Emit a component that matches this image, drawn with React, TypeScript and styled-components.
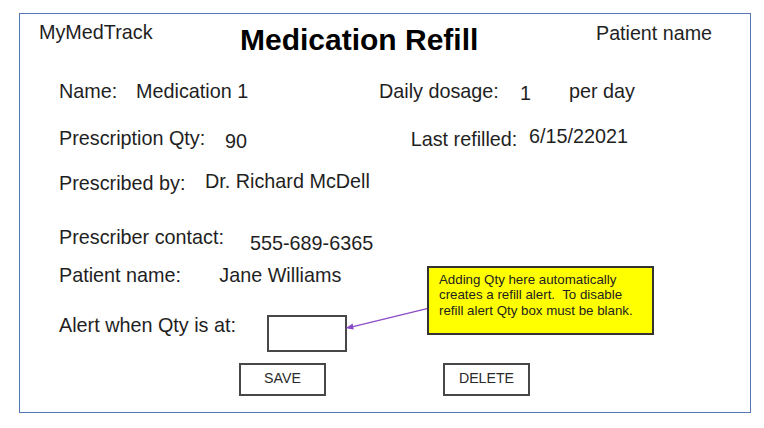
import React from "react";
import styled, { createGlobalStyle } from "styled-components";

const Global = createGlobalStyle`
  html, body { margin: 0; padding: 0; background: #ffffff; }
  body { font-family: "Liberation Sans", Arial, sans-serif; color: #1f1f1f; }
`;

const Frame = styled.div`
  position: relative;
  box-sizing: border-box;
  margin: 13px 0 0 19px;
  width: 732px;
  height: 400px;
  border: 1px solid #5877b6;
  background: #fff;
`;

const Header = styled.header`
  display: grid;
  grid-template-columns: 201px 356px 1fr;
  height: 66px;
  padding-left: 19px;
`;

const Brand = styled.div`
  margin-top: 7px;
  font-size: 19.8px;
  line-height: 23px;
  white-space: nowrap;
`;

const Title = styled.h1`
  margin: 8.6px 0 0;
  font-size: 30px;
  line-height: 34px;
  font-weight: 700;
  color: #000;
  white-space: nowrap;
`;

const Patient = styled.div`
  margin-top: 8.4px;
  font-size: 19.7px;
  line-height: 23px;
  white-space: nowrap;
`;

const Row = styled.div<{ $h: number }>`
  display: flex;
  align-items: flex-start;
  height: ${(p) => p.$h}px;
  padding-left: 39px;
  font-size: 19.8px;
  line-height: 23px;
`;

const Field = styled.div<{ $w?: number }>`
  display: flex;
  align-items: flex-start;
  ${(p) => (p.$w ? `width: ${p.$w}px; flex: none;` : "")}
`;

const Label = styled.span<{ $w: number; $dy?: number }>`
  width: ${(p) => p.$w}px;
  flex: none;
  margin-top: ${(p) => p.$dy ?? 0}px;
  white-space: nowrap;
`;

const Value = styled.span<{ $w?: number; $dy?: number }>`
  ${(p) => (p.$w ? `width: ${p.$w}px; flex: none;` : "")}
  margin-top: ${(p) => p.$dy ?? 0}px;
  white-space: nowrap;
`;

const QtyBox = styled.input`
  box-sizing: border-box;
  width: 80px;
  height: 37px;
  margin: 0.7px 0 0;
  padding: 0;
  border: 2px solid #474747;
  background: #fff;
  outline: none;
`;

const Buttons = styled.div`
  display: flex;
  gap: 117px;
  padding-left: 219px;
`;

const Button = styled.button`
  box-sizing: border-box;
  width: 87px;
  height: 33px;
  padding: 0 0 2px;
  border: 2px solid #474747;
  background: #fff;
  font-family: "Liberation Sans", Arial, sans-serif;
  font-size: 14.2px;
  color: #2a2a2a;
  cursor: pointer;
`;

const Callout = styled.div`
  position: absolute;
  left: 407px;
  top: 252px;
  box-sizing: border-box;
  width: 227px;
  height: 69px;
  padding: 3.5px 0 0 10px;
  border: 2px solid #333;
  background: #ffff00;
  font-size: 13.3px;
  line-height: 15.5px;
  color: #222;
  white-space: pre;
`;

const Arrow = styled.svg`
  position: absolute;
  left: 0;
  top: 0;
  width: 730px;
  height: 398px;
  pointer-events: none;
  overflow: visible;
`;

export default function App() {
  return (
    <>
      <Global />
      <Frame>
        <Header>
          <Brand>MyMedTrack</Brand>
          <Title>Medication Refill</Title>
          <Patient>Patient name</Patient>
        </Header>

        <Row $h={46.7}>
          <Field $w={320}>
            <Label $w={77}>Name:</Label>
            <Value>Medication 1</Value>
          </Field>
          <Field>
            <Label $w={141}>Daily dosage:</Label>
            <Value $w={49} $dy={1.7}>1</Value>
            <Value>per day</Value>
          </Field>
        </Row>

        <Row $h={45}>
          <Field $w={351.7}>
            <Label $w={166}>Prescription Qty:</Label>
            <Value $dy={3.3}>90</Value>
          </Field>
          <Field>
            <Label $w={118.3} $dy={1.7}>Last refilled:</Label>
            <Value $dy={-1.7}>6/15/22021</Value>
          </Field>
        </Row>

        <Row $h={54}>
          <Label $w={146}>Prescribed by:</Label>
          <Value $dy={-1.3}>Dr. Richard McDell</Value>
        </Row>

        <Row $h={38.3}>
          <Label $w={191}>Prescriber contact:</Label>
          <Value $dy={6.7}>555-689-6365</Value>
        </Row>

        <Row $h={50}>
          <Label $w={160.3}>Patient name:</Label>
          <Value>Jane Williams</Value>
        </Row>

        <Row $h={49}>
          <Label $w={208}>Alert when Qty is at:</Label>
          <QtyBox type="text" aria-label="Alert quantity" />
        </Row>

        <Buttons>
          <Button>SAVE</Button>
          <Button>DELETE</Button>
        </Buttons>

        <Callout>
          {"Adding Qty here automatically\ncreates a refill alert.  To disable\nrefill alert Qty box must be blank."}
        </Callout>

        <Arrow viewBox="0 0 730 398">
          <line x1="407" y1="294.7" x2="331" y2="313.2" stroke="#8b4cc8" strokeWidth="1.3" />
          <polygon points="325.5,314.3 332.6,309.6 333.8,315.4" fill="#8b4cc8" />
        </Arrow>
      </Frame>
    </>
  );
}
